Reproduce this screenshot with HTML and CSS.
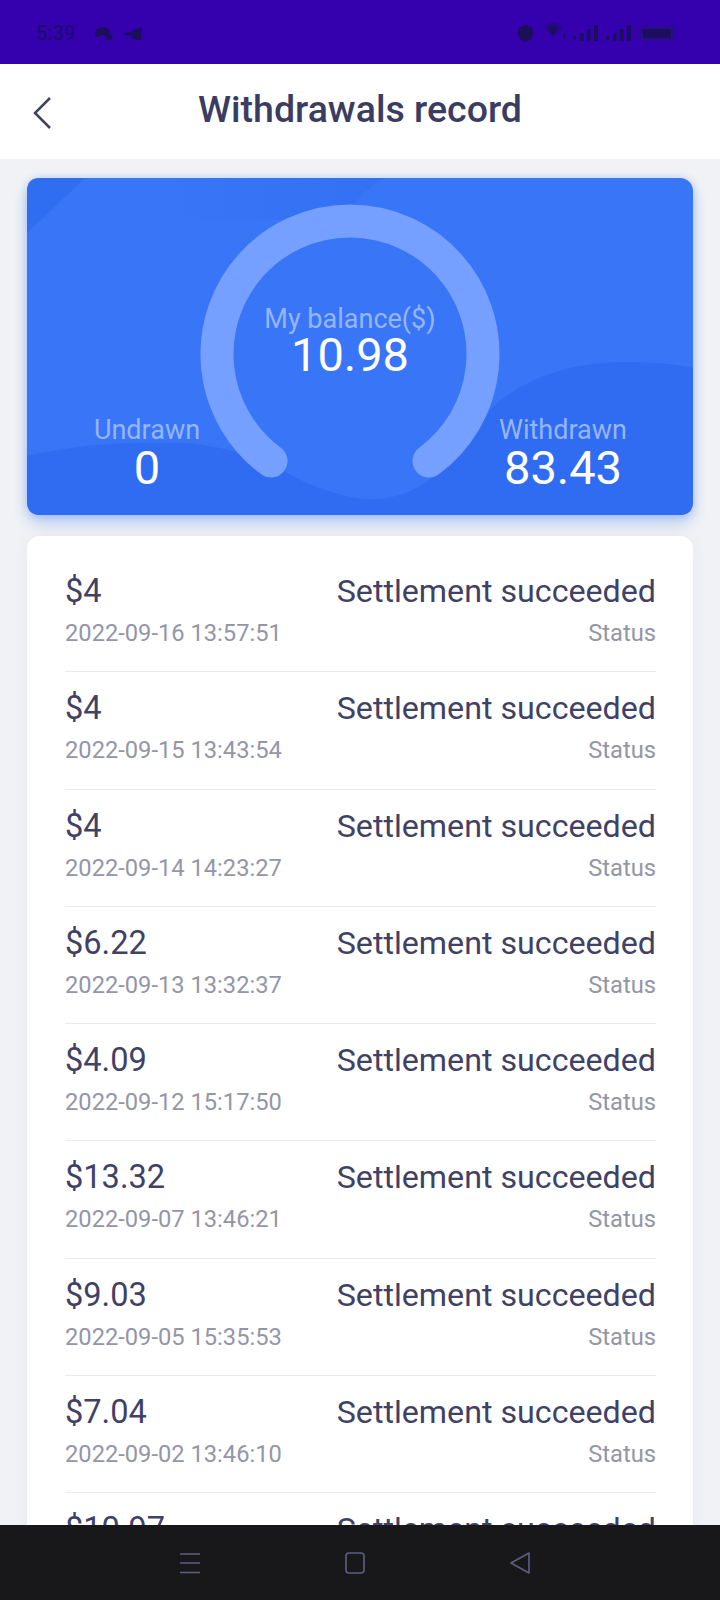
FILE: index.html
```html
<!DOCTYPE html>
<html lang="en">
<head>
<meta charset="utf-8">
<title>Withdrawals record</title>
<link rel="stylesheet" href="styles.css">
</head>
<body>
<div class="screen">
  <div class="statusbar">
    <div class="status-left">
      <span class="clock">5:39</span>
      <svg class="ic-game" viewBox="0 0 18 13"><path d="M1 3C4 0 10-.5 13 1.500L15 5.500 13 7l4 1 1 3-2.500 2-3.500-.5L10 8.500H5L3 10 0 9z"/></svg>
      <svg class="ic-send" viewBox="0 0 19 13"><path d="M19 0 0 7.500l6 1.500 4-1-2 2.500 6 2.500h4z"/></svg>
    </div>
    <div class="status-right">
      <svg class="ic-alarm" viewBox="0 0 17 17"><path d="M8.500 0 15 2.500 16.500 8.500 14 14.500 8.500 17 3 14.500.5 8.500 2 2.500z"/></svg>
      <svg class="ic-wifi" viewBox="0 0 22 17"><path class="wifi-out" d="M0 5C5-1 13-1 18 5L9 16z"/><path d="M4 6c3-2.500 7-2.500 10 0L9 13z"/><rect x="19" y="12" width="2.500" height="4"/></svg>
      <svg class="ic-signal" viewBox="0 0 26 16"><rect x="0" y="11" width="3" height="4"/><rect x="7" y="8" width="3.500" height="8"/><rect x="14" y="4" width="3.500" height="12"/><rect x="21" y="0" width="4" height="16"/></svg>
      <svg class="ic-signal" viewBox="0 0 26 16"><rect x="0" y="11" width="3" height="4"/><rect x="7" y="8" width="3.500" height="8"/><rect x="14" y="4" width="3.500" height="12"/><rect x="21" y="0" width="4" height="16"/></svg>
      <span class="battery"><span class="battery-fill"></span></span>
    </div>
  </div>

  <header class="topbar">
    <svg class="back" viewBox="0 0 18 32"><path d="M17 1 2 16l15 15"/></svg>
    <h1 class="title">Withdrawals record</h1>
  </header>

  <main class="content">
    <section class="hero">
      <svg class="hero-art" viewBox="0 0 666 337" preserveAspectRatio="none">
        <defs>
          <linearGradient id="shade" x1="0" x2="1" y1="0" y2="0">
            <stop class="shade-from" offset="0"/>
            <stop class="shade-to" offset="1"/>
          </linearGradient>
        </defs>
        <path class="art-corner" d="M13 0h45L0 55V13Q0 0 13 0z"/>
        <path class="art-shade" d="M140 0H358Q330 15 318 42L140 42z"/>
        <path class="art-low" d="M0 278Q70 262 160 265Q215 270 258 294C290 312 330 325 360 320C420 310 445 250 470 225Q520 184 600 184Q640 184 666 190V324Q666 337 653 337H13Q0 337 0 324z"/>
        <path class="arc" d="M244 283A133 133 0 1 1 402 283"/>
      </svg>
      <div class="stat stat-left">
        <div class="stat-label">Undrawn</div>
        <div class="stat-value">0</div>
      </div>
      <div class="balance">
        <div class="stat-label">My balance($)</div>
        <div class="balance-value">10.98</div>
      </div>
      <div class="stat stat-right">
        <div class="stat-label">Withdrawn</div>
        <div class="stat-value">83.43</div>
      </div>
    </section>

    <section class="list">
      <div class="row"><div class="row-top"><span class="amount">$4</span><span class="state">Settlement succeeded</span></div><div class="row-sub"><span>2022-09-16 13:57:51</span><span>Status</span></div></div>
      <div class="row"><div class="row-top"><span class="amount">$4</span><span class="state">Settlement succeeded</span></div><div class="row-sub"><span>2022-09-15 13:43:54</span><span>Status</span></div></div>
      <div class="row"><div class="row-top"><span class="amount">$4</span><span class="state">Settlement succeeded</span></div><div class="row-sub"><span>2022-09-14 14:23:27</span><span>Status</span></div></div>
      <div class="row"><div class="row-top"><span class="amount">$6.22</span><span class="state">Settlement succeeded</span></div><div class="row-sub"><span>2022-09-13 13:32:37</span><span>Status</span></div></div>
      <div class="row"><div class="row-top"><span class="amount">$4.09</span><span class="state">Settlement succeeded</span></div><div class="row-sub"><span>2022-09-12 15:17:50</span><span>Status</span></div></div>
      <div class="row"><div class="row-top"><span class="amount">$13.32</span><span class="state">Settlement succeeded</span></div><div class="row-sub"><span>2022-09-07 13:46:21</span><span>Status</span></div></div>
      <div class="row"><div class="row-top"><span class="amount">$9.03</span><span class="state">Settlement succeeded</span></div><div class="row-sub"><span>2022-09-05 15:35:53</span><span>Status</span></div></div>
      <div class="row"><div class="row-top"><span class="amount">$7.04</span><span class="state">Settlement succeeded</span></div><div class="row-sub"><span>2022-09-02 13:46:10</span><span>Status</span></div></div>
      <div class="row"><div class="row-top"><span class="amount">$10.97</span><span class="state">Settlement succeeded</span></div></div>
    </section>
  </main>

  <nav class="navbar">
    <svg class="nav-ic" viewBox="0 0 22 22"><path d="M1 2h20M1 11h20M1 20.500h20"/></svg>
    <svg class="nav-ic" viewBox="0 0 22 22"><rect x="2" y="1" width="18" height="20" rx="3"/></svg>
    <svg class="nav-ic" viewBox="0 0 22 22"><path d="M20 1v20L2 11z" stroke-linejoin="round"/></svg>
  </nav>
</div>
</body>
</html>
```

FILE: styles.css
```css
* { box-sizing: border-box; }
html, body { margin: 0; padding: 0; }
body { font-family: Roboto, "Liberation Sans", sans-serif; background: #f0f2f5; }

.screen { width: 720px; height: 1600px; display: flex; flex-direction: column; overflow: hidden; }

/* status bar */
.statusbar { flex: 0 0 64px; background: #3500ae; display: flex; justify-content: space-between; align-items: center; padding: 2px 44px 0 36px; }
.status-left, .status-right { display: flex; align-items: center; }
.clock { font-size: 20px; font-weight: 500; color: #1f0a70; width: 59px; filter: blur(.4px); }
.statusbar svg { fill: #1b0f5c; filter: blur(.4px); }
.ic-game { width: 18px; height: 13px; margin-right: 10px; }
.ic-send { width: 19px; height: 13px; }
.ic-alarm { width: 17px; height: 17px; margin-right: 10px; }
.ic-wifi { width: 22px; height: 17px; margin: -5px 7px 0 0; }
.ic-wifi .wifi-out { fill: #26098a; }
.ic-signal { width: 26px; height: 16px; margin-right: 7px; }
.battery { width: 38px; height: 15px; margin-left: -1px; border-radius: 5px; background: #2a0b90; padding: 3px 5px; display: block; filter: blur(.4px); }
.battery-fill { display: block; height: 100%; background: #1b0f5c; border-radius: 2px; }

/* header */
.topbar { flex: 0 0 95px; background: #fff; display: flex; align-items: center; justify-content: center; position: relative; }
.back { position: absolute; left: 33px; top: 33px; width: 18px; height: 32px; fill: none; stroke: #3f4165; stroke-width: 2.500; }
.title { margin: 0 0 5px; font-size: 37.500px; font-weight: 500; color: #3a3c62; }

/* content */
.content { flex: 1; min-height: 0; overflow: hidden; padding: 19px 27px 0; }

.hero { position: relative; height: 337px; border-radius: 13px; background: #3875f7; box-shadow: 0 8px 14px rgba(48, 108, 240, .3), 0 0 9px rgba(48, 108, 240, .22); display: grid; grid-template-columns: 236px 174px 1fr; color: #fff; text-align: center; }
.hero-art { position: absolute; inset: 0; width: 100%; height: 100%; }
.art-corner { fill: #2f6ef1; }
.art-shade { fill: url(#shade); }
.shade-from { stop-color: #3875f7; }
.shade-to { stop-color: #3470f3; }
.art-low { fill: #2f6cf1; }
.arc { fill: none; stroke: #76a0ff; stroke-width: 33; stroke-linecap: round; }
.stat, .balance { position: relative; }
.stat { align-self: end; padding-bottom: 24px; }
.stat-left { padding-left: 4px; }
.stat-right { padding-right: 4px; }
.balance { padding-top: 126px; white-space: nowrap; }
.stat-label { font-size: 27px; line-height: 30px; color: #96b5fb; }
.stat-value { font-size: 47px; line-height: 46px; }
.balance-value { font-size: 47px; line-height: 42px; }

/* list */
.list { margin-top: 21px; padding: 19px 37px 0 38px; background: #fff; border-radius: 13px 13px 0 0; box-shadow: 0 0 14px rgba(120, 130, 170, .08); }
.row { height: 117.300px; border-bottom: 1px solid #e9eaee; padding-top: 17px; }
.row:last-child { border-bottom: 0; }
.row-top, .row-sub { display: flex; justify-content: space-between; }
.row-top { font-size: 32.200px; line-height: 38px; color: #3f4165; }
.row-sub { margin-top: 9px; font-size: 23.700px; line-height: 28px; color: #9496a8; }
.amount { font-size: 32.600px; }

/* nav */
.navbar { flex: 0 0 75px; background: #18181a; position: relative; z-index: 1; display: flex; padding: 27px 0 0 179px; gap: 143px; align-items: flex-start; }
.nav-ic { width: 22px; height: 22px; fill: none; stroke: #5e5e84; stroke-width: 1.600; }
```
